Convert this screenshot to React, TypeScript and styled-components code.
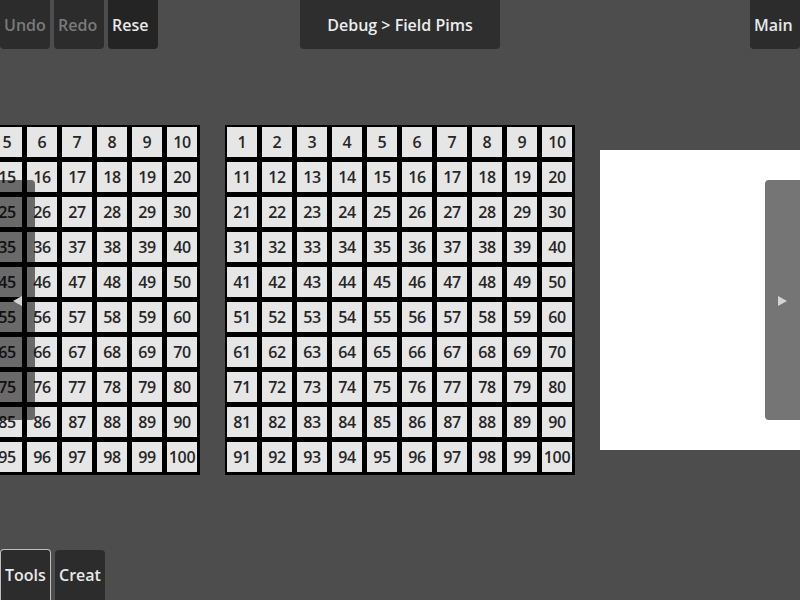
import React from "react";
import styled, { createGlobalStyle } from "styled-components";

const Global = createGlobalStyle`
  html, body { margin: 0; padding: 0; background: #4d4d4d; }
  body { font-family: "Open Sans", "Noto Sans", sans-serif; }
`;

const Screen = styled.div`
  position: relative;
  width: 800px;
  height: 600px;
  overflow: hidden;
  background: #4d4d4d;
  display: flex;
  flex-direction: column;
`;

const TopBar = styled.div`
  height: 50px;
  flex: none;
  display: grid;
  grid-template-columns: 1fr auto 1fr;
  align-items: start;
`;

const BottomBar = styled.div`
  height: 50px;
  flex: none;
  display: flex;
  align-items: flex-end;
`;

const Group = styled.div<{ $end?: boolean }>`
  display: flex;
  gap: 4px;
  align-items: flex-end;
  justify-content: ${(p) => (p.$end ? "flex-end" : "flex-start")};
`;

const Btn = styled.div<{ $dim?: boolean; $dark?: boolean; $bottom?: boolean; $focus?: boolean; $w?: number }>`
  box-sizing: border-box;
  width: ${(p) => p.$w ?? 50}px;
  height: ${(p) => (p.$focus ? 51 : p.$bottom ? 50 : 49)}px;
  padding-left: 4px;
  display: flex;
  align-items: center;
  overflow: hidden;
  white-space: nowrap;
  font-size: 16px;
  font-weight: 600;
  color: ${(p) => (p.$dim ? "#7a7a7a" : "#e8e8e8")};
  background: ${(p) => (p.$dark ? "#242424" : "#2c2c2c")};
  border-radius: ${(p) => (p.$bottom ? "4px 4px 0 0" : "0 0 4px 4px")};
  border: ${(p) => (p.$focus ? "1px solid #bdbdbd" : "none")};
  border-bottom: ${(p) => (p.$focus ? "none" : "")};
`;

const Title = styled.div`
  width: 200px;
  height: 49px;
  display: flex;
  align-items: center;
  justify-content: center;
  font-size: 16px;
  font-weight: 600;
  color: #ececec;
  background: #2e2e2e;
  border-radius: 0 0 4px 4px;
`;

const Middle = styled.div`
  flex: 1;
  display: flex;
  align-items: center;
  gap: 25px;
  margin-left: -150px;
`;

const Grid = styled.div`
  flex: none;
  display: grid;
  grid-template-columns: repeat(10, 30px);
  grid-auto-rows: 30px;
  gap: 5px;
  padding: 2px 3px 3px 2px;
  background: #000;
`;

const Cell = styled.div`
  background: #e6e6e6;
  display: flex;
  align-items: center;
  justify-content: center;
  font-size: 16px;
  font-weight: 600;
  color: #262626;
  letter-spacing: -0.3px;
`;

const WhitePanel = styled.div`
  flex: none;
  width: 300px;
  height: 300px;
  background: #ffffff;
`;

const Side = styled.div<{ $right?: boolean }>`
  position: absolute;
  top: 180px;
  ${(p) => (p.$right ? "right: 0;" : "left: 0;")}
  width: 35px;
  height: 240px;
  background: rgba(0, 0, 0, 0.54);
  border-radius: ${(p) => (p.$right ? "4px 0 0 4px" : "0 4px 4px 0")};
  display: flex;
  align-items: center;
  justify-content: center;
`;

const ArrowSvg = styled.svg`
  display: block;
  margin-top: 2px;
`;

const Arrow = ({ right }: { right?: boolean }) => (
  <ArrowSvg width="9" height="10" viewBox="0 0 9 10">
    {right ? <polygon points="0,0 9,5 0,10" fill="#d4d4d4" /> : <polygon points="9,0 0,5 9,10" fill="#d4d4d4" />}
  </ArrowSvg>
);

const nums = Array.from({ length: 100 }, (_, i) => i + 1);

const NumberGrid = () => (
  <Grid>
    {nums.map((n) => (
      <Cell key={n}>{n}</Cell>
    ))}
  </Grid>
);

export default function App() {
  return (
    <>
      <Global />
      <Screen>
        <TopBar>
          <Group>
            <Btn $dim>Undo</Btn>
            <Btn $dim>Redo</Btn>
            <Btn $dark>Rese</Btn>
          </Group>
          <Title>Debug &gt; Field Pims</Title>
          <Group $end>
            <Btn>Main</Btn>
          </Group>
        </TopBar>
        <Middle>
          <NumberGrid />
          <NumberGrid />
          <WhitePanel />
        </Middle>
        <BottomBar>
          <Group>
            <Btn $bottom $focus $w={51}>Tools</Btn>
            <Btn $bottom>Creat</Btn>
          </Group>
        </BottomBar>
        <Side>
          <Arrow />
        </Side>
        <Side $right>
          <Arrow right />
        </Side>
      </Screen>
    </>
  );
}
